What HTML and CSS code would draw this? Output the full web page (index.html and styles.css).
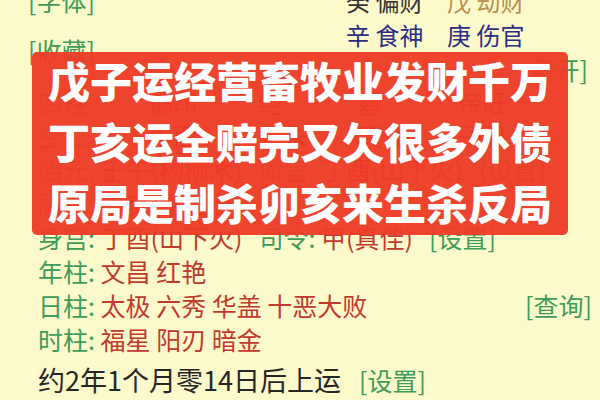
FILE: index.html
```html
<!DOCTYPE html>
<html lang="zh-CN">
<head>
<meta charset="utf-8">
<title>排盘</title>
<link rel="stylesheet" href="styles.css">
</head>
<body>
<div class="page">
  <div class="top">
    <div class="left-col">
      <div class="link">[字体]</div>
      <div class="link fav">[收藏]</div>
    </div>
    <div class="right-col">
      <div class="pair-row"><span class="pair dark">癸 偏财</span><span class="pair gold">戊 劫财</span></div>
      <div class="pair-row blue"><span class="pair">辛 食神</span><span class="pair">庚 伤官</span></div>
      <div class="expand link">[展开]</div>
    </div>
  </div>

  <div class="hidden-rows">
    <div class="grid-row"><span class="lbl">四柱</span><span class="val">偏印</span><span class="val">绝</span><span class="val">墓</span><span class="val">帝旺</span></div>
    <div class="grid-row"><span class="lbl">空亡</span><span class="dark">申酉</span><span class="dark">午未</span><span class="dark">寅卯</span><span class="dark">子丑</span></div>
    <div class="row"><span class="lbl">胎元:</span> <span class="val">壬午(杨柳木)</span><span class="lbl gapl">命宫:</span> <span class="val">丁酉(山下火)</span><span class="link gapl">[设置]</span></div>
    <div class="row"><span class="lbl">胎息:</span> <span class="val">丁亥(屋上土)</span></div>
  </div>

  <div class="row"><span class="lbl">身宫:</span> <span class="val">丁酉(山下火)</span><span class="lbl gapl">司令:</span> <span class="val">甲(真佳)</span><span class="link gapl">[设置]</span></div>
  <div class="row"><span class="lbl">年柱:</span> <span class="val">文昌 红艳</span></div>
  <div class="row split"><span class="line"><span class="lbl">日柱:</span> <span class="val">太极 六秀 华盖 十恶大败</span></span><span class="link">[查询]</span></div>
  <div class="row"><span class="lbl">时柱:</span> <span class="val">福星 阳刃 暗金</span></div>
  <div class="row last"><span class="big">约2年1个月零14日后上运</span><span class="link gapb">[设置]</span></div>
</div>

<div class="banner">
  <div class="banner-line">戊子运经营畜牧业发财千万</div>
  <div class="banner-line">丁亥运全赔完又欠很多外债</div>
  <div class="banner-line">原局是制杀卯亥来生杀反局</div>
</div>
</body>
</html>
```

FILE: styles.css
```css
html {
  overflow: hidden;
}

body {
  margin: 0;
  background: #fcf9cb;
  font-family: "Noto Sans CJK SC", "Noto Sans", sans-serif;
  color: #2a2a2a;
}

.page {
  margin-top: -17px;
  padding: 0 8px 0 28px;
}

.link {
  color: #3d9c57;
}

.lbl {
  color: #3d9c57;
}

.val {
  color: #c03a2e;
}

.dark {
  color: #333333;
}

.gold {
  color: #b8904e;
}

.blue {
  color: #2b2d86;
}

/* top area */
.top {
  display: flex;
  font-size: 24px;
}

.left-col {
  width: 318px;
  display: flex;
  flex-direction: column;
  line-height: 34px;
  font-size: 25px;
}

.fav {
  margin-top: 16px;
}

.right-col {
  flex: 1;
  display: flex;
  flex-direction: column;
  padding-top: 1px;
  line-height: 34px;
}

.pair-row {
  display: flex;
}

.pair {
  width: 101px;
}

.expand {
  align-self: flex-end;
  margin-right: 4px;
  font-size: 25px;
}

/* hidden rows under banner */
.hidden-rows {
  height: 134px;
  display: flex;
  flex-direction: column;
  justify-content: space-between;
}

.grid-row {
  display: grid;
  grid-template-columns: 110px 110px 100px 100px 100px;
  padding-left: 10px;
  font-size: 25px;
  line-height: 33px;
}

/* detail rows */
.row {
  height: 34px;
  line-height: 34px;
  padding-left: 10px;
  font-size: 25px;
  white-space: nowrap;
}

.split {
  display: flex;
  justify-content: space-between;
}

.gapl {
  margin-left: 16px;
}

.last {
  margin-top: 1px;
  height: 46px;
  line-height: 46px;
  display: flex;
  align-items: center;
}

.big {
  font-size: 27px;
  color: #262626;
}

.gapb {
  margin-left: 18px;
}

/* overlay banner */
.banner {
  position: absolute;
  left: 32px;
  top: 52px;
  width: 536px;
  height: 183px;
  box-sizing: border-box;
  padding-bottom: 6px;
  background: rgba(237, 60, 40, 0.96);
  border-radius: 5px;
  color: #ffffff;
  font-weight: 900;
  font-size: 42px;
  line-height: 61px;
  text-align: center;
  display: flex;
  flex-direction: column;
  justify-content: center;
  white-space: nowrap;
}
```
